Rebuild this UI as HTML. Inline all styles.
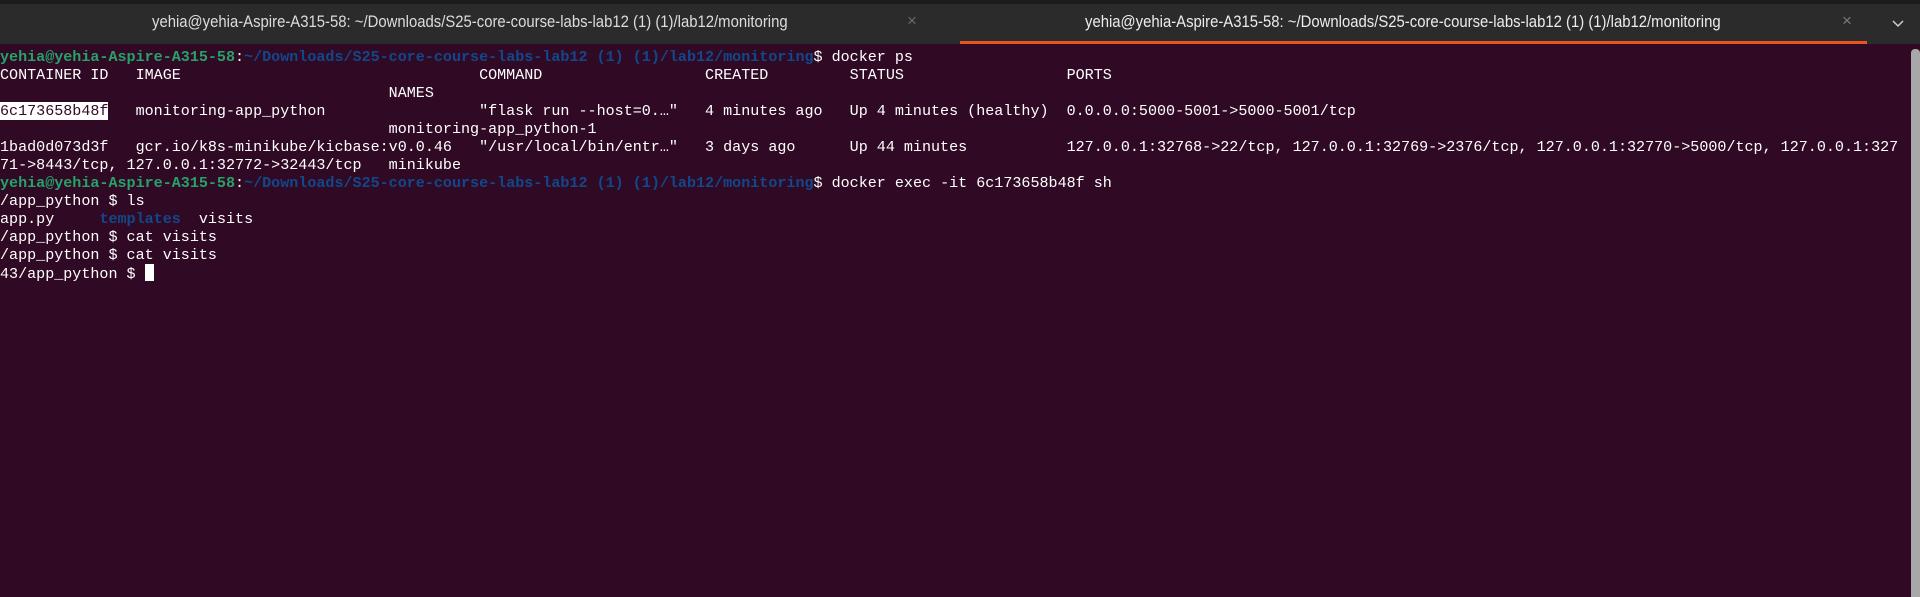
<!DOCTYPE html>
<html><head><meta charset="utf-8"><style>
html,body{margin:0;padding:0;width:1920px;height:597px;overflow:hidden;background:#300a24}
.top{position:absolute;left:0;top:0;width:1920px;height:4px;background:#1c1c1c}
.bar{position:absolute;left:0;top:4px;width:1920px;height:40px;background:#2b2b2b}
.t{position:absolute;top:12px;font:17px "Liberation Sans",sans-serif;color:#dcdcdc;white-space:nowrap;transform-origin:0 0;transform:scaleX(0.875)}
.x{position:absolute;top:11px;font:17px "Liberation Sans",sans-serif;color:#6a6a6a}
.ul{position:absolute;left:960px;top:41px;width:907px;height:3px;background:#e95420}
.sb{position:absolute;left:1911px;top:49px;width:9px;height:548px;background:#a8a8a8;border-radius:4px 4px 0 0}
pre{position:absolute;left:0;top:48px;margin:0;font:15.07px/18px "Liberation Mono",monospace;color:#fff;white-space:pre}
.g{color:#26a269;font-weight:bold}.b{color:#12488b;font-weight:bold}
.sel{background:#fff;color:#300a24}
.cur{display:inline-block;width:9px;height:17px;background:#fff;vertical-align:-3px}
</style></head><body>
<div class="top"></div><div class="bar"></div>
<div class="t" style="left:152px">yehia@yehia-Aspire-A315-58: ~/Downloads/S25-core-course-labs-lab12 (1) (1)/lab12/monitoring</div>
<div class="x" style="left:907px">×</div>
<div class="t" style="left:1085px;color:#ececec">yehia@yehia-Aspire-A315-58: ~/Downloads/S25-core-course-labs-lab12 (1) (1)/lab12/monitoring</div>
<div class="x" style="left:1842px;color:#7a7a7a">×</div>
<svg style="position:absolute;left:1892px;top:20px" width="12" height="8"><path d="M1 1 L6 6 L11 1" stroke="#cfcfcf" stroke-width="1.5" fill="none"/></svg>
<div class="ul"></div>
<div class="sb"></div>
<pre><span class="g">yehia@yehia-Aspire-A315-58</span>:<span class="b">~/Downloads/S25-core-course-labs-lab12 (1) (1)/lab12/monitoring</span>$ docker ps
CONTAINER ID   IMAGE                                 COMMAND                  CREATED         STATUS                  PORTS
                                           NAMES
<span class="sel">6c173658b48f</span>   monitoring-app_python                 "flask run --host=0.…"   4 minutes ago   Up 4 minutes (healthy)  0.0.0.0:5000-5001-&gt;5000-5001/tcp
                                           monitoring-app_python-1
1bad0d073d3f   gcr.io/k8s-minikube/kicbase:v0.0.46   "/usr/local/bin/entr…"   3 days ago      Up 44 minutes           127.0.0.1:32768-&gt;22/tcp, 127.0.0.1:32769-&gt;2376/tcp, 127.0.0.1:32770-&gt;5000/tcp, 127.0.0.1:327
71-&gt;8443/tcp, 127.0.0.1:32772-&gt;32443/tcp   minikube
<span class="g">yehia@yehia-Aspire-A315-58</span>:<span class="b">~/Downloads/S25-core-course-labs-lab12 (1) (1)/lab12/monitoring</span>$ docker exec -it 6c173658b48f sh
/app_python $ ls
app.py     <span class="b">templates</span>  visits
/app_python $ cat visits
/app_python $ cat visits
43/app_python $ <span class="cur"></span></pre>
</body></html>
